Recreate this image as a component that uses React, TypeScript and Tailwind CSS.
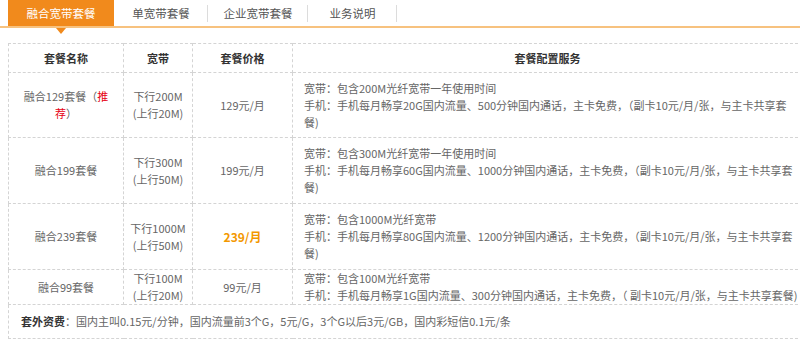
import React from "react";

const tabs = [
  { label: "融合宽带套餐", width: "w-[106px]" },
  { label: "单宽带套餐", width: "w-[94px]" },
  { label: "企业宽带套餐", width: "w-[100px]" },
  { label: "业务说明", width: "w-[89px]" },
];

type Plan = {
  name: React.ReactNode;
  down: string;
  up: string;
  price: React.ReactNode;
  broadband: string;
  mobile: string[];
  height: string;
};

const plans: Plan[] = [
  {
    name: (
      <>
        融合129套餐（<span className="text-[#e60012]">推</span>
        <br />
        <span className="text-[#e60012]">荐</span>）
      </>
    ),
    down: "下行200M",
    up: "(上行20M)",
    price: "129元/月",
    broadband: "宽带：包含200M光纤宽带一年使用时间",
    mobile: [
      "手机：手机每月畅享20G国内流量、500分钟国内通话，主卡免费，（副卡10元/月/张，与主卡共享套",
      "餐)",
    ],
    height: "h-[65px]",
  },
  {
    name: "融合199套餐",
    down: "下行300M",
    up: "(上行50M)",
    price: "199元/月",
    broadband: "宽带：包含300M光纤宽带一年使用时间",
    mobile: [
      "手机：手机每月畅享60G国内流量、1000分钟国内通话，主卡免费，（副卡10元/月/张，与主卡共享套",
      "餐)",
    ],
    height: "h-[66px]",
  },
  {
    name: "融合239套餐",
    down: "下行1000M",
    up: "(上行50M)",
    price: <span className="text-[12px] font-bold text-[#f39800]">239/月</span>,
    broadband: "宽带：包含1000M光纤宽带",
    mobile: [
      "手机：手机每月畅享80G国内流量、1200分钟国内通话，主卡免费，（副卡10元/月/张，与主卡共享套",
      "餐)",
    ],
    height: "h-[66px]",
  },
  {
    name: "融合99套餐",
    down: "下行100M",
    up: "(上行20M)",
    price: "99元/月",
    broadband: "宽带：包含100M光纤宽带",
    mobile: [
      "手机：手机每月畅享1G国内流量、300分钟国内通话，主卡免费，（ 副卡10元/月/张，与主卡共享套餐)",
    ],
    height: "h-[34px]",
  },
];

const cell = "border border-dashed border-[#d4d4d4] p-0 align-middle";

const App = () => {
  return (
    <div className="w-[800px] h-[347px] overflow-hidden bg-white font-['Noto_Sans_CJK_SC',sans-serif] text-[11px] leading-[17px] text-[#666]">
      {/* tab bar */}
      <div className="relative flex h-[28px] border-b-2 border-[#f7c27f] pl-2">
        {tabs.map((tab, i) => {
          const isActive = i === 0;
          return (
            <div
              key={tab.label}
              className={`relative flex h-[26px] items-center justify-center text-[11.5px] ${tab.width} ${
                isActive ? "bg-[#f18a1c] text-white" : "text-[#555]"
              }`}
            >
              {tab.label}
              {!isActive && (
                <span className="absolute right-0 top-[5px] h-[17px] w-px bg-[#dcdcdc]" />
              )}
              {isActive && (
                <span className="absolute left-1/2 top-[28px] -translate-x-1/2 border-x-[5px] border-t-[6px] border-x-transparent border-t-[#f18a1c]" />
              )}
            </div>
          );
        })}
      </div>

      {/* plan table */}
      <table className="ml-2 mt-[15px] w-[795px] table-fixed border-collapse">
        <colgroup>
          <col className="w-[115px]" />
          <col className="w-[69px]" />
          <col className="w-[100px]" />
          <col />
        </colgroup>
        <thead>
          <tr className="h-[29px] font-bold text-[#333]">
            <th className={cell}>套餐名称</th>
            <th className={cell}>宽带</th>
            <th className={cell}>套餐价格</th>
            <th className={cell}>套餐配置服务</th>
          </tr>
        </thead>
        <tbody>
          {plans.map((plan) => (
            <tr key={plan.down} className={plan.height}>
              <td className={`${cell} px-2 text-center`}>{plan.name}</td>
              <td className={`${cell} text-center`}>
                {plan.down}
                <br />
                {plan.up}
              </td>
              <td className={`${cell} text-center`}>{plan.price}</td>
              <td className={`${cell} whitespace-nowrap pl-[11px]`}>
                <div>{plan.broadband}</div>
                {plan.mobile.map((line) => (
                  <div key={line}>{line}</div>
                ))}
              </td>
            </tr>
          ))}
          <tr className="h-[34px]">
            <td colSpan={4} className={`${cell} pl-3`}>
              <span className="font-bold text-[#333]">套外资费</span>
              ：国内主叫0.15元/分钟，国内流量前3个G，5元/G，3个G以后3元/GB，国内彩短信0.1元/条
            </td>
          </tr>
        </tbody>
      </table>
    </div>
  );
};

export default App;
